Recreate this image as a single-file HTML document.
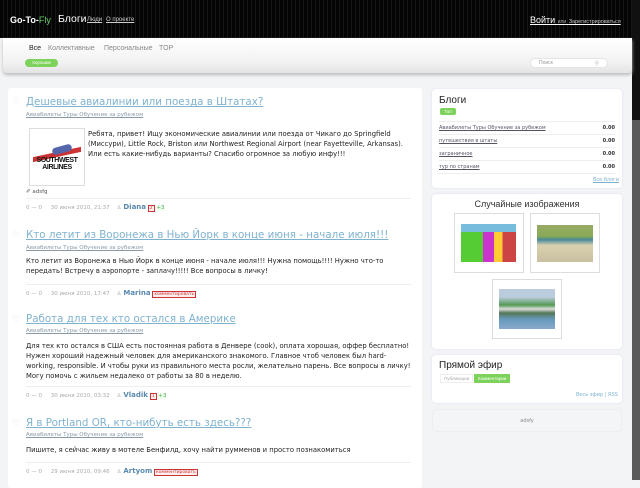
<!DOCTYPE html>
<html><head><meta charset="utf-8"><style>
*{margin:0;padding:0;box-sizing:border-box}
body{width:640px;height:480px;overflow:hidden;background:#f3f4f6;font-family:"DejaVu Sans","Liberation Sans","Noto Sans CJK SC",sans-serif;position:relative}
.a{position:absolute}
#hdr{left:0;top:0;width:632px;height:38px;background:repeating-linear-gradient(90deg,#050505 0 3px,#151515 3px 4px)}
#sb{left:632px;top:0;width:8px;height:480px;background:#5a5a5a}
#sbt{left:632px;top:0;width:8px;height:120px;background:#111}
#nav{left:3px;top:38px;width:629px;height:35px;background:linear-gradient(#fff,#f2f2f2 70%,#e4e4e4);box-shadow:0 2px 3px #bbb;border-radius:0 0 4px 4px}
.t{font-family:"Liberation Sans","Noto Sans CJK SC",sans-serif}
#main{left:8px;top:88px;width:414px;height:400px;background:#fff;border-radius:3px}
.box{background:#fff;border-radius:4px;box-shadow:0 0 2px #dde}
.ttl{font-size:10.3px;color:#7fb2d0;text-decoration:underline;font-family:"DejaVu Sans",sans-serif;white-space:nowrap}
.tags{font-size:5.5px;color:#8a9aa8;text-decoration:underline;white-space:nowrap}
.txt{font-size:6.8px;color:#222;line-height:10px}
.meta{font-size:5.5px;color:#aaa;white-space:nowrap}
.meta b{color:#5a8ab0;font-size:7px}
.hr{height:1px;background:#eee;width:385px}
.kc{display:inline-block;border:1px solid #c33;color:#c33;font-size:4.5px;padding:0 1px;background:#fee}
.heart{font-size:9px;color:#ddd}
.fr{border:1px solid #ddd;background:#fff}
</style></head><body>
<div class="a" id="hdr"></div>
<div class="a" id="sb"></div><div class="a" id="sbt"></div>
<div class="a t" style="left:10px;top:15px;color:#fff;font-size:9px;font-weight:bold">Go-To-<span style="color:#6c6;font-weight:normal">Fly</span></div>
<div class="a t" style="left:58px;top:13px;color:#fff;font-size:10.5px">Блоги</div>
<div class="a t" style="left:87px;top:17px;color:#ccc;font-size:6px;text-decoration:underline">Люди</div>
<div class="a t" style="left:106px;top:17px;color:#ccc;font-size:6px;text-decoration:underline">О проекте</div>
<div class="a t" style="left:530px;top:15px;color:#fff;font-size:9px;text-decoration:underline">Войти <span style="font-size:5px;text-decoration:none;color:#aaa">или</span> <span style="font-size:5.5px;color:#ccc">Зарегистрироваться</span></div>
<div class="a" id="nav"></div>
<div class="a t" style="left:29px;top:45px;font-size:7px;color:#222">Все</div>
<div class="a t" style="left:48px;top:45px;font-size:7px;color:#888">Коллективные</div>
<div class="a t" style="left:104px;top:45px;font-size:7px;color:#888">Персональные</div>
<div class="a t" style="left:159px;top:45px;font-size:7px;color:#888">TOP</div>
<div class="a t" style="left:25px;top:59px;width:33px;height:8px;border-radius:4px;background:#7cd25a;color:#fff;font-size:4.5px;text-align:center;line-height:8px">Хорошие</div>
<div class="a t" style="left:530px;top:58px;width:78px;height:10px;border-radius:5px;background:#fff;border:1px solid #e4e4e4;font-size:5px;color:#999;padding:1px 8px">Поиск<span style="float:right;color:#bbb;font-size:6px">⚲</span></div>

<div class="a" id="main"></div>
<!-- post1 -->
<div class="a heart" style="left:12px;top:97px">♡</div>
<div class="a ttl" style="left:26px;top:96px">Дешевые авиалинии или поезда в Штатах?</div>
<div class="a tags" style="left:26px;top:112px">Авиабилеты Туры Обучение за рубежом</div>
<div class="a fr" style="left:29px;top:128px;width:56px;height:58px"></div>
<div class="a" style="left:33px;top:152px;width:48px;height:5px;background:#c33;transform:skewY(-12deg)"></div>
<div class="a" style="left:52px;top:146px;width:20px;height:7px;background:#5566aa;border-radius:4px;transform:rotate(-15deg)"></div>
<div class="a t" style="left:31px;top:157px;width:52px;text-align:center;font-size:7px;font-weight:bold;line-height:7px;color:#111;letter-spacing:-.4px">SOUTHWEST<br>AIRLINES</div>
<div class="a txt" style="left:88px;top:129px;width:330px">Ребята, привет! Ищу экономические авиалинии или поезда от Чикаго до Springfield (Миссури), Little Rock, Briston или Northwest Regional Airport (near Fayetteville, Arkansas). Или есть какие-нибудь варианты? Спасибо огромное за любую инфу!!!</div>
<div class="a meta" style="left:26px;top:189px;color:#555">✐ adsfg</div>
<div class="a hr" style="left:26px;top:198px"></div>
<div class="a meta" style="left:26px;top:203px">0 — 0 &nbsp;&nbsp;&nbsp; 30 июня 2010, 21:37 &nbsp;&nbsp; ♙ <b>Diana</b> <span class="kc">2</span> <span style="color:#5a5;background:#efe">+3</span></div>
<!-- post2 -->
<div class="a heart" style="left:12px;top:231px">♡</div>
<div class="a ttl" style="left:26px;top:229px">Кто летит из Воронежа в Нью Йорк в конце июня - начале июля!!!</div>
<div class="a tags" style="left:26px;top:245px">Авиабилеты Туры Обучение за рубежом</div>
<div class="a txt" style="left:26px;top:256px;width:390px">Кто летит из Воронежа в Нью Йорк в конце июня - начале июля!!! Нужна помощь!!!! Нужно что-то передать! Встречу в аэропорте - заплачу!!!!! Все вопросы в личку!</div>
<div class="a hr" style="left:26px;top:284px"></div>
<div class="a meta" style="left:26px;top:289px">0 — 0 &nbsp;&nbsp;&nbsp; 30 июня 2010, 17:47 &nbsp;&nbsp; ♙ <b>Marina</b> <span class="kc">комментировать</span></div>
<!-- post3 -->
<div class="a heart" style="left:12px;top:315px">♡</div>
<div class="a ttl" style="left:26px;top:313px">Работа для тех кто остался в Америке</div>
<div class="a tags" style="left:26px;top:328px">Авиабилеты Туры Обучение за рубежом</div>
<div class="a txt" style="left:26px;top:341px;width:385px">Для тех кто остался в США есть постоянная работа в Денвере (cook), оплата хорошая, оффер бесплатно! Нужен хороший надежный человек для американского знакомого. Главное чтоб человек был hard-working, responsible. И чтобы руки из правильного места росли, желательно парень. Все вопросы в личку! Могу помочь с жильем недалеко от работы за 80 в неделю.</div>
<div class="a hr" style="left:26px;top:386px"></div>
<div class="a meta" style="left:26px;top:391px">0 — 0 &nbsp;&nbsp;&nbsp; 30 июня 2010, 03:32 &nbsp;&nbsp; ♙ <b>Vladik</b> <span class="kc">1</span> <span style="color:#5a5;background:#efe">+3</span></div>
<!-- post4 -->
<div class="a heart" style="left:12px;top:419px">♡</div>
<div class="a ttl" style="left:26px;top:417px">Я в Portland OR, кто-нибуть есть здесь???</div>
<div class="a tags" style="left:26px;top:432px">Авиабилеты Туры Обучение за рубежом</div>
<div class="a txt" style="left:26px;top:445px;width:395px">Пишите, я сейчас живу в мотеле Бенфилд, хочу найти румменов и просто познакомиться</div>
<div class="a hr" style="left:26px;top:462px"></div>
<div class="a meta" style="left:26px;top:467px">0 — 0 &nbsp;&nbsp;&nbsp; 29 июня 2010, 09:46 &nbsp;&nbsp; ♙ <b>Artyom</b> <span class="kc">комментировать</span></div>

<!-- right -->
<div class="a box" style="left:432px;top:89px;width:190px;height:99px"></div>
<div class="a t" style="left:439px;top:95px;font-size:10px;color:#222">Блоги</div>
<div class="a t" style="left:440px;top:108px;width:16px;height:7px;background:#7cd25a;border-radius:2px;font-size:4.5px;color:#fff;text-align:center;line-height:7px">Топ</div>
<div class="a" style="left:439px;top:121px;width:176px;font-size:5px;color:#556;line-height:12px">
<div style="border-top:1px solid #eee"><u>Авиабилеты Туры Обучение за рубежом</u><b style="float:right;color:#333">0.00</b></div>
<div style="border-top:1px solid #eee"><u>путешествия в штаты</u><b style="float:right;color:#333">0.00</b></div>
<div style="border-top:1px solid #eee"><u>заграничное</u><b style="float:right;color:#333">0.00</b></div>
<div style="border-top:1px solid #eee;border-bottom:1px solid #eee"><u>тур по странам</u><b style="float:right;color:#333">0.00</b></div></div>
<div class="a" style="left:593px;top:177px;font-size:5px;color:#7fb2d0;text-decoration:underline">Все блоги</div>

<div class="a box" style="left:432px;top:194px;width:190px;height:155px"></div>
<div class="a t" style="left:432px;top:199px;width:190px;text-align:center;font-size:9px;color:#333">Случайные изображения</div>
<div class="a fr" style="left:454px;top:213px;width:70px;height:60px"></div>
<div class="a" style="left:461px;top:224px;width:55px;height:38px;background:linear-gradient(90deg,#5c3 0 40%,#c3c 40% 60%,#fc3 60% 75%,#c44 75%);border-top:8px solid #7bd"></div>
<div class="a fr" style="left:530px;top:213px;width:70px;height:60px"></div>
<div class="a" style="left:537px;top:225px;width:56px;height:37px;background:linear-gradient(#9a6 0,#8a5 30%,#4a8a9a 40%,#d9d0b0 55%,#c8c0a0)"></div>
<div class="a fr" style="left:492px;top:279px;width:70px;height:60px"></div>
<div class="a" style="left:499px;top:289px;width:56px;height:40px;background:linear-gradient(#bcd 0,#bcd 20%,#595 40%,#ddd 50%,#575 60%,#69b 75%,#8ac)"></div>

<div class="a box" style="left:432px;top:355px;width:190px;height:48px"></div>
<div class="a t" style="left:439px;top:360px;font-size:10px;color:#222">Прямой эфир</div>
<div class="a t" style="left:440px;top:374px;font-size:4.5px;color:#aaa;border:1px solid #eee;padding:1px 3px">Публикации</div>
<div class="a t" style="left:474px;top:374px;font-size:4.5px;color:#fff;background:#7cd25a;padding:2px 4px">Комментарии</div>
<div class="a" style="left:576px;top:392px;font-size:5px;color:#7fb2d0">Весь эфир | RSS</div>
<div class="a" style="left:432px;top:409px;width:190px;height:23px;background:#f4f5f7;border-radius:4px;border:1px solid #eee;font-size:5px;color:#888;text-align:center;line-height:22px">adsfy</div>
</body></html>
